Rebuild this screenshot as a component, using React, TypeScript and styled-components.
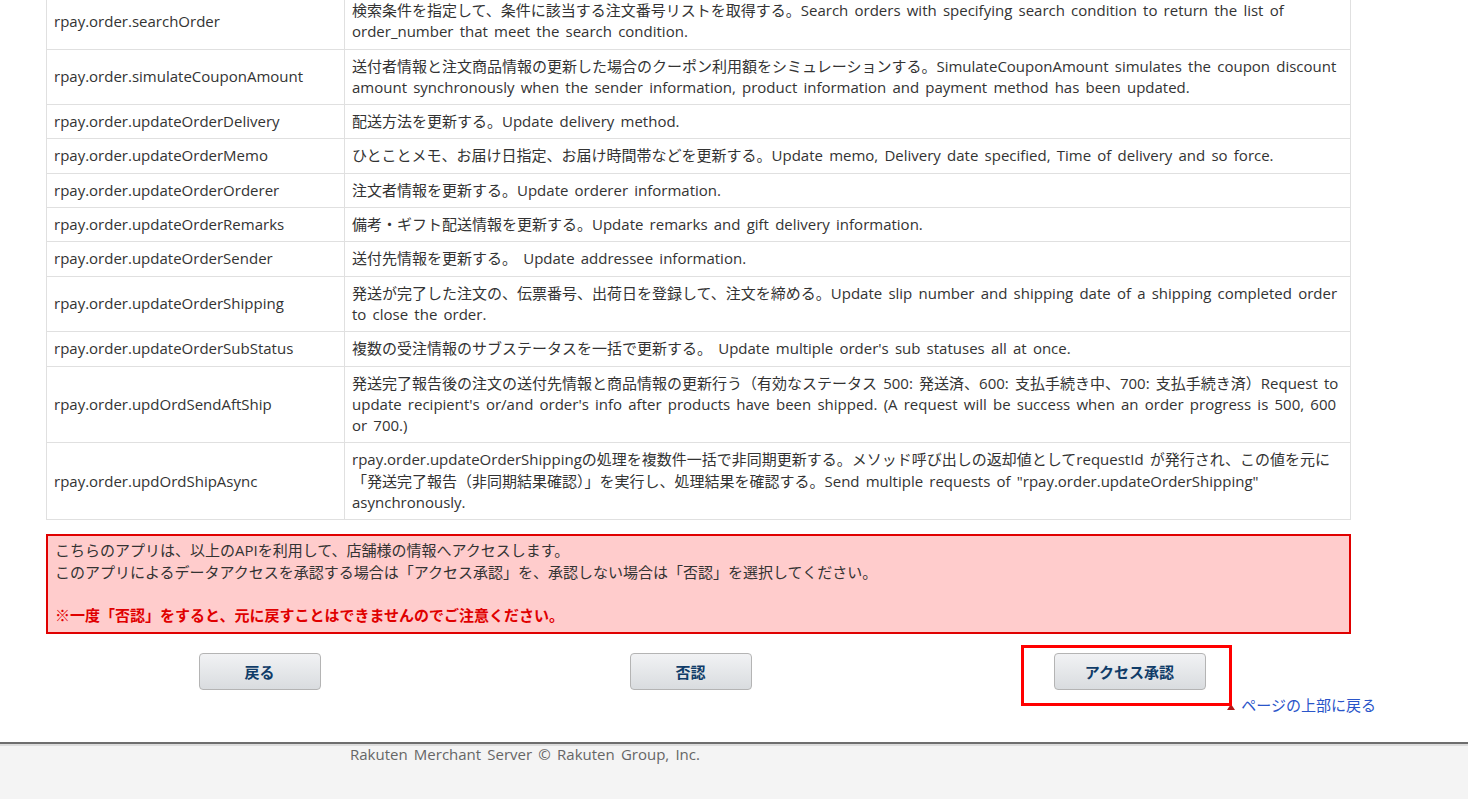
import React from "react";
import styled, { createGlobalStyle } from "styled-components";

const GlobalStyle = createGlobalStyle`
  html, body {
    margin: 0;
    padding: 0;
    background: #fff;
  }
  body {
    font-family: "Open Sans", "Noto Sans CJK JP", sans-serif;
    font-size: 15px;
    word-spacing: 2.3px;
    color: #333;
  }
`;

interface ApiRow {
  name: string;
  description: string;
}

const apiRows: ApiRow[] = [
  {
    name: "rpay.order.searchOrder",
    description:
      "検索条件を指定して、条件に該当する注文番号リストを取得する。Search orders with specifying search condition to return the list of order_number that meet the search condition.",
  },
  {
    name: "rpay.order.simulateCouponAmount",
    description:
      "送付者情報と注文商品情報の更新した場合のクーポン利用額をシミュレーションする。SimulateCouponAmount simulates the coupon discount amount synchronously when the sender information, product information and payment method has been updated.",
  },
  {
    name: "rpay.order.updateOrderDelivery",
    description: "配送方法を更新する。Update delivery method.",
  },
  {
    name: "rpay.order.updateOrderMemo",
    description:
      "ひとことメモ、お届け日指定、お届け時間帯などを更新する。Update memo, Delivery date specified, Time of delivery and so force.",
  },
  {
    name: "rpay.order.updateOrderOrderer",
    description: "注文者情報を更新する。Update orderer information.",
  },
  {
    name: "rpay.order.updateOrderRemarks",
    description: "備考・ギフト配送情報を更新する。Update remarks and gift delivery information.",
  },
  {
    name: "rpay.order.updateOrderSender",
    description: "送付先情報を更新する。 Update addressee information.",
  },
  {
    name: "rpay.order.updateOrderShipping",
    description:
      "発送が完了した注文の、伝票番号、出荷日を登録して、注文を締める。Update slip number and shipping date of a shipping completed order to close the order.",
  },
  {
    name: "rpay.order.updateOrderSubStatus",
    description:
      "複数の受注情報のサブステータスを一括で更新する。 Update multiple order's sub statuses all at once.",
  },
  {
    name: "rpay.order.updOrdSendAftShip",
    description:
      "発送完了報告後の注文の送付先情報と商品情報の更新行う（有効なステータス 500: 発送済、600: 支払手続き中、700: 支払手続き済）Request to update recipient's or/and order's info after products have been shipped. (A request will be success when an order progress is 500, 600 or 700.)",
  },
  {
    name: "rpay.order.updOrdShipAsync",
    description:
      "rpay.order.updateOrderShippingの処理を複数件一括で非同期更新する。メソッド呼び出しの返却値としてrequestId が発行され、この値を元に「発送完了報告（非同期結果確認）」を実行し、処理結果を確認する。Send multiple requests of \"rpay.order.updateOrderShipping\" asynchronously.",
  },
];

const App = () => {
  return (
    <>
      <GlobalStyle />
      <Page>
        <Main>
          <ApiTable>
            <tbody>
              {apiRows.map((row) => (
                <tr key={row.name}>
                  <NameCell>{row.name}</NameCell>
                  <DescCell>{row.description}</DescCell>
                </tr>
              ))}
            </tbody>
          </ApiTable>

          <Notice>
            <p>こちらのアプリは、以上のAPIを利用して、店舗様の情報へアクセスします。</p>
            <p>このアプリによるデータアクセスを承認する場合は「アクセス承認」を、承認しない場合は「否認」を選択してください。</p>
            <p>&nbsp;</p>
            <Warning>※一度「否認」をすると、元に戻すことはできませんのでご注意ください。</Warning>
          </Notice>

          <ButtonRow>
            <ButtonCell>
              <ActionButton>戻る</ActionButton>
            </ButtonCell>
            <ButtonCell>
              <ActionButton>否認</ActionButton>
            </ButtonCell>
            <ButtonCell>
              <Highlight>
                <ActionButton wide>アクセス承認</ActionButton>
              </Highlight>
            </ButtonCell>
          </ButtonRow>

          <TopLinkRow>
            <TopLink href="#">
              <Arrow />
              ページの上部に戻る
            </TopLink>
          </TopLinkRow>
        </Main>

        <Footer>Rakuten Merchant Server © Rakuten Group, Inc.</Footer>
      </Page>
    </>
  );
};

export default App;

const Page = styled.div`
  display: flex;
  flex-direction: column;
  min-height: 100vh;
`;

const Main = styled.div`
  padding-left: 46px;
  margin-top: -7px;
  width: 1330px;
`;

const ApiTable = styled.table`
  width: 1305px;
  border-collapse: collapse;
  line-height: 21.3px;

  td {
    border: 1px solid #e0e0e0;
    padding: 6px 6px 6px 7px;
    vertical-align: middle;
  }
`;

const NameCell = styled.td`
  width: 284px;
  white-space: nowrap;
`;

const DescCell = styled.td``;

const Notice = styled.div`
  margin-top: 14px;
  width: 1305px;
  box-sizing: border-box;
  border: 2px solid #e00000;
  background: #ffcccc;
  padding: 4px 7px 6px;
  line-height: 21.5px;
  word-spacing: normal;

  p {
    margin: 0;
  }
`;

const Warning = styled.p`
  color: #e00000;
  font-weight: bold;
`;

const ButtonRow = styled.div`
  display: grid;
  grid-template-columns: 427px 435px 1fr;
  width: 1305px;
  margin-top: 19px;
`;

const ButtonCell = styled.div`
  display: flex;
  justify-content: center;
`;

const Highlight = styled.div`
  position: relative;

  &::after {
    content: "";
    position: absolute;
    left: -33px;
    right: -26px;
    top: -8px;
    bottom: -16px;
    border: 3px solid #ff0000;
    pointer-events: none;
  }
`;

const ActionButton = styled.button<{ wide?: boolean }>`
  width: ${({ wide }) => (wide ? "152px" : "122px")};
  height: 37px;
  border: 1px solid #b4b4b4;
  border-radius: 4px;
  background: linear-gradient(#f1f2f4, #d9dcdf);
  color: #103c68;
  font-family: "Noto Sans CJK JP", sans-serif;
  font-size: 15px;
  font-weight: bold;
  cursor: pointer;
`;

const TopLinkRow = styled.div`
  display: flex;
  justify-content: flex-end;
  margin-top: 3px;
  height: 49px;
`;

const TopLink = styled.a`
  display: flex;
  align-items: center;
  gap: 6px;
  height: 22px;
  color: #2a55c9;
  text-decoration: none;
  font-family: "Noto Sans CJK JP", sans-serif;
  font-size: 15px;
`;

const Arrow = styled.span`
  width: 0;
  height: 0;
  border-left: 4px solid transparent;
  border-right: 4px solid transparent;
  border-bottom: 6px solid #b21818;
  margin-top: 6px;
`;

const Footer = styled.footer`
  flex: 1;
  border-top: 2px solid #6e6e6e;
  box-shadow: inset 0 2px 0 #dcdcdc;
  background: #f4f4f4;
  color: #666;
  padding: 0 0 0 350px;
  line-height: 21.5px;
  font-size: 15px;
`;
